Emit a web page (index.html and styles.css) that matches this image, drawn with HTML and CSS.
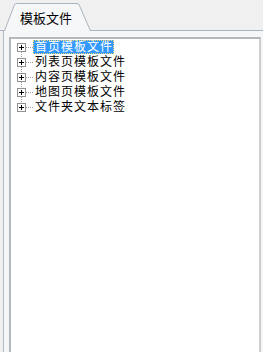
FILE: index.html
```html
<!DOCTYPE html>
<html lang="zh-CN">
<head>
    <meta charset="UTF-8">
    <meta name="viewport" content="width=device-width, initial-scale=1.0">
    <title> 模板文件 </title>
    <link rel="stylesheet" href="styles.css">
</head>
<body>
    <div class = "tabstrip">
        <div class = "tab">
            <svg class = "tab_shape" width="88" height="28" viewBox="0 0 88 28">
                <polygon points="0.5,28 10.5,1.5 12.5,0.5 73,0.5 75,1.5 86.5,28" fill="#f6f7f8" />
                <polyline points="0.5,28 10.5,1.5 12.5,0.5 73,0.5 75,1.5 86.5,28" fill="none" stroke="#a9b4c0" stroke-width="1" />
            </svg>
            <span class = "tab_label"> 模板文件 </span>
        </div>
    </div>
    <div class = "panel">
        <div class = "tree">
            <div class = "node">
                <span class = "expander"></span>
                <span class = "connector"></span>
                <span class = "label selected">首页模板文件</span>
            </div>
            <div class = "node">
                <span class = "expander"></span>
                <span class = "connector"></span>
                <span class = "label">列表页模板文件</span>
            </div>
            <div class = "node">
                <span class = "expander"></span>
                <span class = "connector"></span>
                <span class = "label">内容页模板文件</span>
            </div>
            <div class = "node">
                <span class = "expander"></span>
                <span class = "connector"></span>
                <span class = "label">地图页模板文件</span>
            </div>
            <div class = "node last">
                <span class = "expander"></span>
                <span class = "connector"></span>
                <span class = "label">文件夹文本标签</span>
            </div>
        </div>
    </div>
</body>
</html>
```

FILE: styles.css
```css
* {
    margin: 0px;
    padding: 0px;
    box-sizing: border-box;
}

body {
    background-color: #f0f0f0;
    font-family: "Liberation Sans", "Noto Sans CJK SC", sans-serif;
    font-size: 12px;
    color: #000000;
    overflow: hidden;
    width: 263px;
    height: 352px;
}

.tabstrip {
    height: 31px;
    display: flex;
    align-items: flex-end;
    padding-left: 4px;
    border-bottom: 1px solid #a9b4c0;
}

.tab {
    position: relative;
    width: 88px;
    height: 28px;
    margin-bottom: -1px;
    padding-left: 16px;
    padding-top: 8px;
}

.tab_shape {
    position: absolute;
    top: 0px;
    left: 0px;
}

.tab_label {
    position: relative;
    display: block;
    font-size: 13px;
    line-height: 15px;
    white-space: nowrap;
}

.panel {
    margin-left: 3px;
    border-left: 1px solid #b3bcc6;
    background-color: #f4f6f8;
    padding-top: 6px;
    padding-left: 5px;
    height: 330px;
}

.tree {
    width: 252px;
    height: 330px;
    background-color: #ffffff;
    border-top: 2px solid #b4b8bc;
    border-left: 2px solid #b4b8bc;
    border-right: 2px solid #cdcdcd;
    padding-left: 6px;
}

.node {
    display: flex;
    align-items: center;
    height: 15px;
    position: relative;
}

.expander {
    position: relative;
    width: 9px;
    height: 9px;
    border: 1px solid #919191;
    background-color: #ffffff;
    background-image:
        linear-gradient(#000000, #000000),
        linear-gradient(#000000, #000000);
    background-size: 5px 1px, 1px 5px;
    background-position: 1px 3px, 3px 1px;
    background-repeat: no-repeat;
    margin-top: 1px;
}

.node:not(.last) .expander::after {
    content: "";
    position: absolute;
    left: 3px;
    top: 8px;
    height: 7px;
    border-left: 1px dotted #a0a0a0;
}

.connector {
    width: 7px;
    border-top: 1px dotted #a0a0a0;
    margin-top: 1px;
}

.label {
    display: block;
    height: 14px;
    line-height: 14px;
    padding: 0px 1px 0px 2px;
    letter-spacing: 1px;
    white-space: nowrap;
}

.selected {
    background-color: #3399ff;
    color: #ffffff;
    outline: 1px dotted #f3d36b;
    outline-offset: -1px;
}
```
